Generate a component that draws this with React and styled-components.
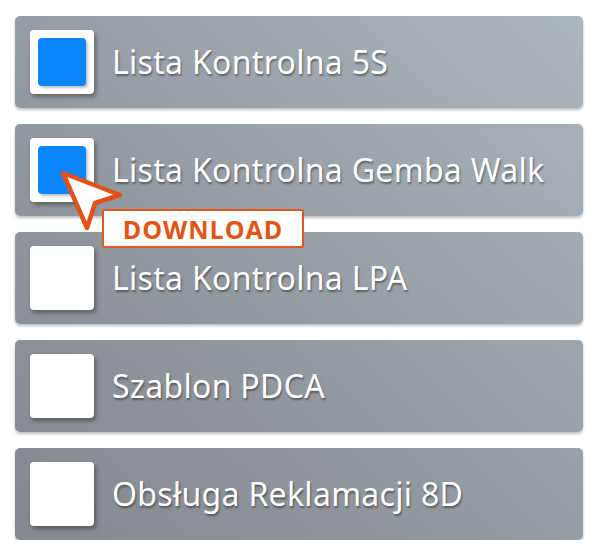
import React from "react";
import styled, { createGlobalStyle } from "styled-components";

const GlobalStyle = createGlobalStyle`
  body {
    margin: 0;
    background: #ffffff;
    font-family: "Noto Sans", "Open Sans", sans-serif;
  }
`;

const List = styled.div`
  display: flex;
  flex-direction: column;
  gap: 16px;
  padding: 16px 17px 0 15px;
  width: 600px;
  box-sizing: border-box;
`;

const Row = styled.div`
  position: relative;
  display: flex;
  align-items: center;
  gap: 18px;
  height: 92px;
  padding-left: 15px;
  border-radius: 5px;
  background: linear-gradient(to top right, #83878d 0%, #949aa1 45%, #adb7be 100%);
  background-attachment: fixed;
  box-shadow: 0 2px 3px rgba(0, 0, 0, 0.25);
`;

const Box = styled.div`
  flex: none;
  width: 64px;
  height: 64px;
  box-sizing: border-box;
  padding: 8px;
  border-radius: 4px;
  background: #ffffff;
  box-shadow: 2px 3px 4px rgba(0, 0, 0, 0.35);
`;

const Fill = styled.div`
  width: 100%;
  height: 100%;
  border-radius: 4px;
  background: #0a85ff;
  box-shadow: 2px 2px 3px rgba(0, 0, 0, 0.25);
`;

const Label = styled.span`
  color: #ffffff;
  font-size: 32px;
  letter-spacing: 0.3px;
  text-shadow: 1px 2px 2px rgba(0, 0, 0, 0.4);
  white-space: nowrap;
  margin-top: -2px;
`;

const Pointer = styled.svg`
  position: absolute;
  left: 44px;
  top: 45px;
  z-index: 3;
`;

const Badge = styled.div`
  position: absolute;
  left: 87px;
  top: 85px;
  z-index: 2;
  width: 202px;
  height: 39px;
  box-sizing: border-box;
  display: flex;
  align-items: center;
  justify-content: center;
  border: 2px solid #e4561a;
  border-radius: 3px;
  background: #ffffff;
  color: #e25414;
  font-family: "Open Sans", "Noto Sans", sans-serif;
  font-weight: 700;
  font-size: 25px;
  letter-spacing: 1px;
`;

const items = [
  { name: "Lista Kontrolna 5S", checked: true },
  { name: "Lista Kontrolna Gemba Walk", checked: true, download: true },
  { name: "Lista Kontrolna LPA" },
  { name: "Szablon PDCA" },
  { name: "Obsługa Reklamacji 8D" },
];

const App = () => (
  <>
    <GlobalStyle />
    <List>
      {items.map(item => (
        <Row key={item.name}>
          <Box>{item.checked && <Fill />}</Box>
          <Label>{item.name}</Label>
          {item.download && (
            <>
              <Badge>DOWNLOAD</Badge>
              <Pointer width="66" height="64" viewBox="0 0 66 64">
                <path
                  d="M4 4 L61 26 L36 34 L28 59 Z"
                  fill="#ffffff"
                  stroke="#e0521a"
                  strokeWidth="4.5"
                  strokeLinejoin="round"
                />
              </Pointer>
            </>
          )}
        </Row>
      ))}
    </List>
  </>
);

export default App;
